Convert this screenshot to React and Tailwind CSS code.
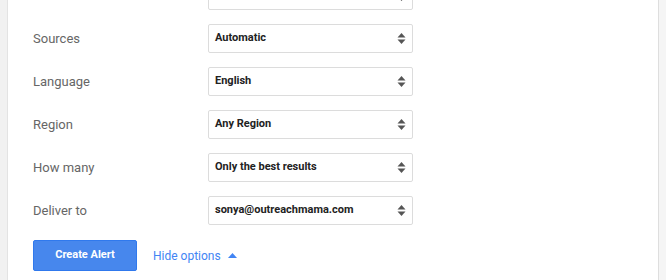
import { useState } from "react";

const rows = [
  { label: "Sources", value: "Automatic" },
  { label: "Language", value: "English" },
  { label: "Region", value: "Any Region" },
  { label: "How many", value: "Only the best results" },
  { label: "Deliver to", value: "sonya@outreachmama.com" },
];

function Arrows() {
  return (
    <svg width="9" height="13" viewBox="0 0 9 13" className="text-[#555]">
      <path d="M4.5 1 L8.5 5.5 H0.5 Z" fill="currentColor" />
      <path d="M4.5 12 L8.5 7.5 H0.5 Z" fill="currentColor" />
    </svg>
  );
}

function SelectBox({ value }) {
  return (
    <div className="w-[205px] h-[29px] border border-[#dcdcdc] rounded-[2px] bg-white flex items-center justify-between pl-[6px] pr-[6px]">
      <span className="text-[11px] font-bold text-[#222]">{value}</span>
      <Arrows />
    </div>
  );
}

export default function App() {
  const [open] = useState(true);

  return (
    <div className="flex w-[666px] h-[280px] overflow-hidden bg-white font-['Roboto',sans-serif]">
      <div className="w-[8px] shrink-0 bg-[#f1f1f1] border-r border-[#e3e3e3]" />

      <main className="w-[650px] shrink-0 pl-[25px] overflow-hidden">
        {/* clipped row from above */}
        <div className="flex items-center -mt-[19px] h-[29px]">
          <div className="w-[175px]" />
          <SelectBox value="At most once a day" />
        </div>

        {open && (
          <div className="flex flex-col gap-[14px] mt-[14px]">
            {rows.map((r) => (
              <div key={r.label} className="flex items-center h-[29px]">
                <div className="w-[175px] text-[13px] text-[#666]">{r.label}</div>
                <SelectBox value={r.value} />
              </div>
            ))}
          </div>
        )}

        <div className="flex items-center mt-[15px]">
          <button className="w-[104px] h-[31px] rounded-[2px] bg-[#4787ed] border border-[#3079ed] text-white text-[11px] font-bold">
            Create Alert
          </button>
          <button className="ml-[16px] flex items-center text-[12px] text-[#4285f4]">
            Hide options
            <svg width="9" height="5" viewBox="0 0 9 5" className="ml-[7px]">
              <path d="M4.5 0 L9 5 H0 Z" fill="#4285f4" />
            </svg>
          </button>
        </div>
      </main>

      <div className="flex-1 bg-[#f5f5f5] border-l border-[#dedede]" />
    </div>
  );
}
